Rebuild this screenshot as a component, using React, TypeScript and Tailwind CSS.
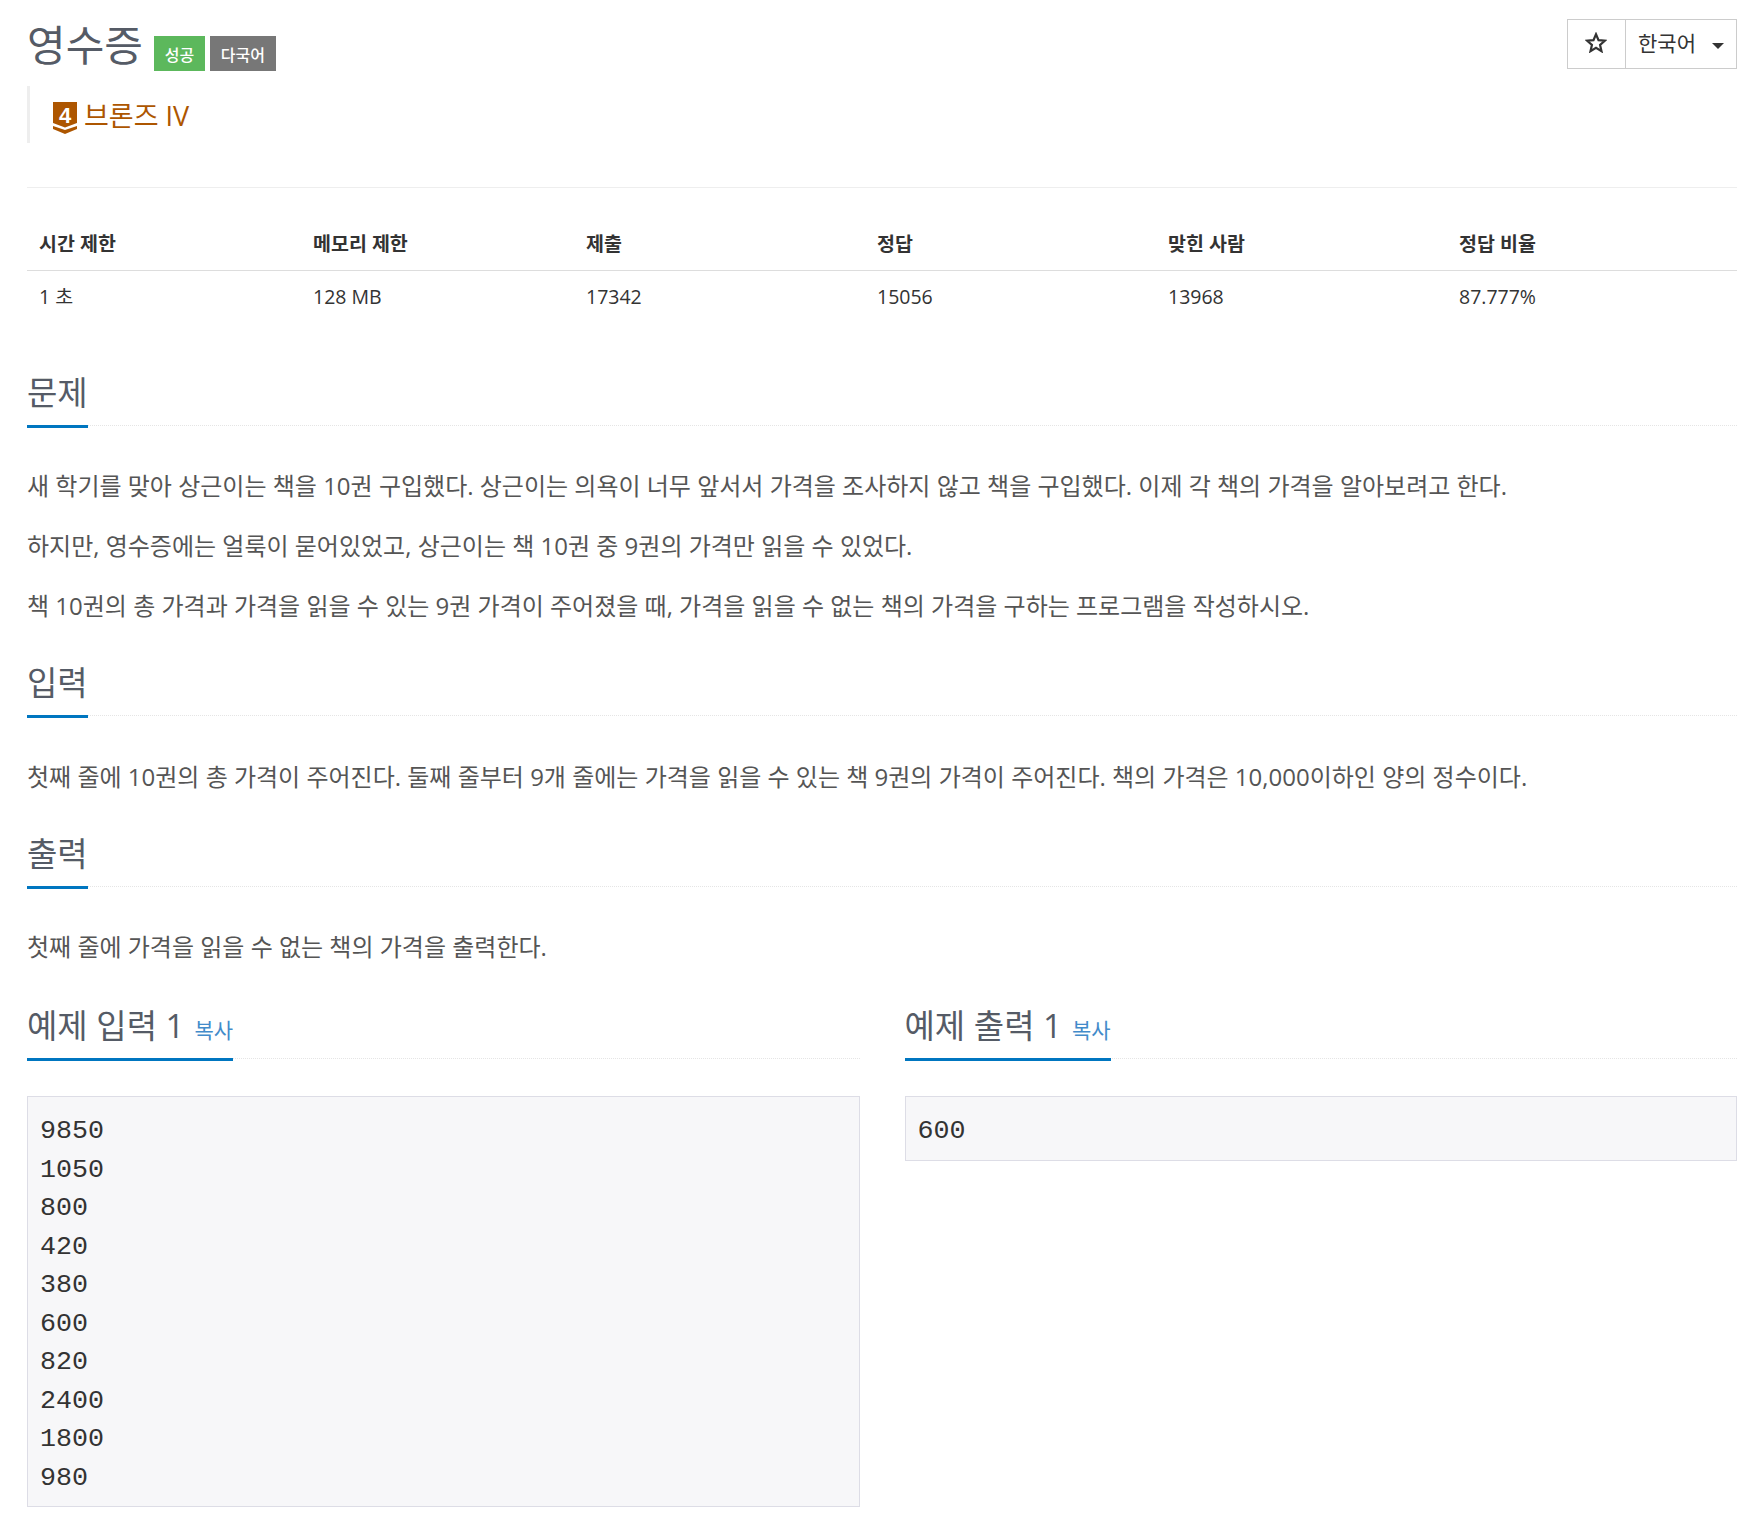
const FONT = "font-['Open_Sans','Noto_Sans_CJK_KR',sans-serif]";

const stats = [
  { label: "시간 제한", value: "1 초" },
  { label: "메모리 제한", value: "128 MB" },
  { label: "제출", value: "17342" },
  { label: "정답", value: "15056" },
  { label: "맞힌 사람", value: "13968" },
  { label: "정답 비율", value: "87.777%" },
];

function Heading({ children, extra }: { children: React.ReactNode; extra?: React.ReactNode }) {
  return (
    <div className="border-b border-dotted border-[#e5e5e5]">
      <div className="-mb-[3px] inline-flex h-[56px] items-start border-b-[3px] border-[#0076c0] leading-[42px]">
        <h2 className="text-[33px] font-normal text-[#555b66]">{children}</h2>
        {extra}
      </div>
    </div>
  );
}

function Copy() {
  return <span className="ml-[10px] mt-1 text-[21px] text-[#428bca]">복사</span>;
}

function Sample({ title, lines }: { title: string; lines: string[] }) {
  return (
    <div>
      <Heading extra={<Copy />}>{title}</Heading>
      <pre className="mt-[37px] border border-[#dddde6] bg-[#f7f7f9] px-3 pb-[9px] pt-[15px] font-['Liberation_Mono',monospace] text-[26.67px] leading-[38.5px] text-[#333]">
        {lines.join("\n")}
      </pre>
    </div>
  );
}

function BronzeBadge() {
  return (
    <svg width="24" height="32" viewBox="0 0 24 32" className="shrink-0">
      <path d="M0 0H24V21L12 25.500L0 21Z" fill="#ad5600" />
      <path d="M0 24L12 28L24 24V27L12 32L0 27Z" fill="#ad5600" />
      <text x="12" y="20.500" textAnchor="middle" fontSize="22" fontWeight="700" fill="#fff" fontFamily="'Liberation Sans',sans-serif">4</text>
    </svg>
  );
}

export default function App() {
  return (
    <div className={`${FONT} min-h-[1532px] bg-white px-[27px] text-[#333]`}>
      <div className="flex items-start justify-between pt-[19px]">
        <div className="flex items-end">
          <h1 className="text-[42px] font-normal leading-[52px] text-[#555b66]">영수증</h1>
          <span className="ml-[11px] flex h-[35px] w-[51px] items-center justify-center bg-[#5cb85c] pt-[2px] text-[16px] font-medium text-white">성공</span>
          <span className="ml-[5px] flex h-[35px] w-[66px] items-center justify-center bg-[#777] pt-[2px] text-[16px] font-medium text-white">다국어</span>
        </div>
        <div className="flex h-[50px] w-[170px] border border-[#ccc] text-[21px]">
          <button className="flex w-[58px] items-center justify-center border-r border-[#ccc] pb-1 pr-[2px] text-[#333]">
            <svg width="22" height="21" viewBox="0 0 20 19" fill="none" stroke="#333" strokeWidth="2">
              <path d="M10 2L12.3 7.4L18 7.9L13.700 11.700L15 17.400L10 14.400L5 17.400L6.300 11.700L2 7.900L7.700 7.400Z" />
            </svg>
          </button>
          <button className="flex flex-1 items-center pl-3">
            한국어
            <span className="ml-4 mt-[3px] h-0 w-0 border-x-[6px] border-t-[6px] border-x-transparent border-t-[#333]" />
          </button>
        </div>
      </div>

      <div className="mt-[15px] flex h-[57px] items-start gap-[2px] border-l-[3px] border-[#eee] pl-[23px] pt-[16px]">
        <BronzeBadge />
        <span className="ml-[5px] -mt-[2px] text-[27px] leading-[32px] text-[#ad5600]">브론즈 IV</span>
      </div>

      <div className="mt-[44px] border-t border-[#eee]">
        <div className="grid h-[83px] grid-cols-[273px_273px_291px_291px_291px_1fr] items-end border-b border-[#ddd] pb-[13px]">
          {stats.map((s, i) => (
            <div key={s.label} className={i === 0 ? "pl-3 text-[19.5px] font-bold leading-[26px]" : "pl-[13px] text-[19.5px] font-bold leading-[26px]"}>{s.label}</div>
          ))}
        </div>
        <div className="grid h-[52px] grid-cols-[273px_273px_291px_291px_291px_1fr] items-center">
          {stats.map((s, i) => (
            <div key={s.label} className={i === 0 ? "pl-3 text-[19.5px]" : "pl-[13px] text-[19.5px]"}>{s.value}</div>
          ))}
        </div>
      </div>

      <section className="mt-[49px]">
        <Heading>문제</Heading>
        <div className="mt-[45px] flex flex-col gap-[30px] text-[24px] leading-[30px] text-[#555]">
          <p>새 학기를 맞아 상근이는 책을 10권 구입했다. 상근이는 의욕이 너무 앞서서 가격을 조사하지 않고 책을 구입했다. 이제 각 책의 가격을 알아보려고 한다.</p>
          <p>하지만, 영수증에는 얼룩이 묻어있었고, 상근이는 책 10권 중 9권의 가격만 읽을 수 있었다.</p>
          <p>책 10권의 총 가격과 가격을 읽을 수 있는 9권 가격이 주어졌을 때, 가격을 읽을 수 없는 책의 가격을 구하는 프로그램을 작성하시오.</p>
        </div>
      </section>

      <section className="mt-[41px]">
        <Heading>입력</Heading>
        <p className="mt-[46px] text-[24px] leading-[30px] text-[#555]">첫째 줄에 10권의 총 가격이 주어진다. 둘째 줄부터 9개 줄에는 가격을 읽을 수 있는 책 9권의 가격이 주어진다. 책의 가격은 10,000이하인 양의 정수이다.</p>
      </section>

      <section className="mt-[41px]">
        <Heading>출력</Heading>
        <p className="mt-[45px] text-[24px] leading-[30px] text-[#555]">첫째 줄에 가격을 읽을 수 없는 책의 가격을 출력한다.</p>
      </section>

      <div className="mt-[43px] grid grid-cols-2 items-start gap-[45px]">
        <Sample title="예제 입력 1" lines={["9850", "1050", "800", "420", "380", "600", "820", "2400", "1800", "980"]} />
        <Sample title="예제 출력 1" lines={["600"]} />
      </div>
    </div>
  );
}
